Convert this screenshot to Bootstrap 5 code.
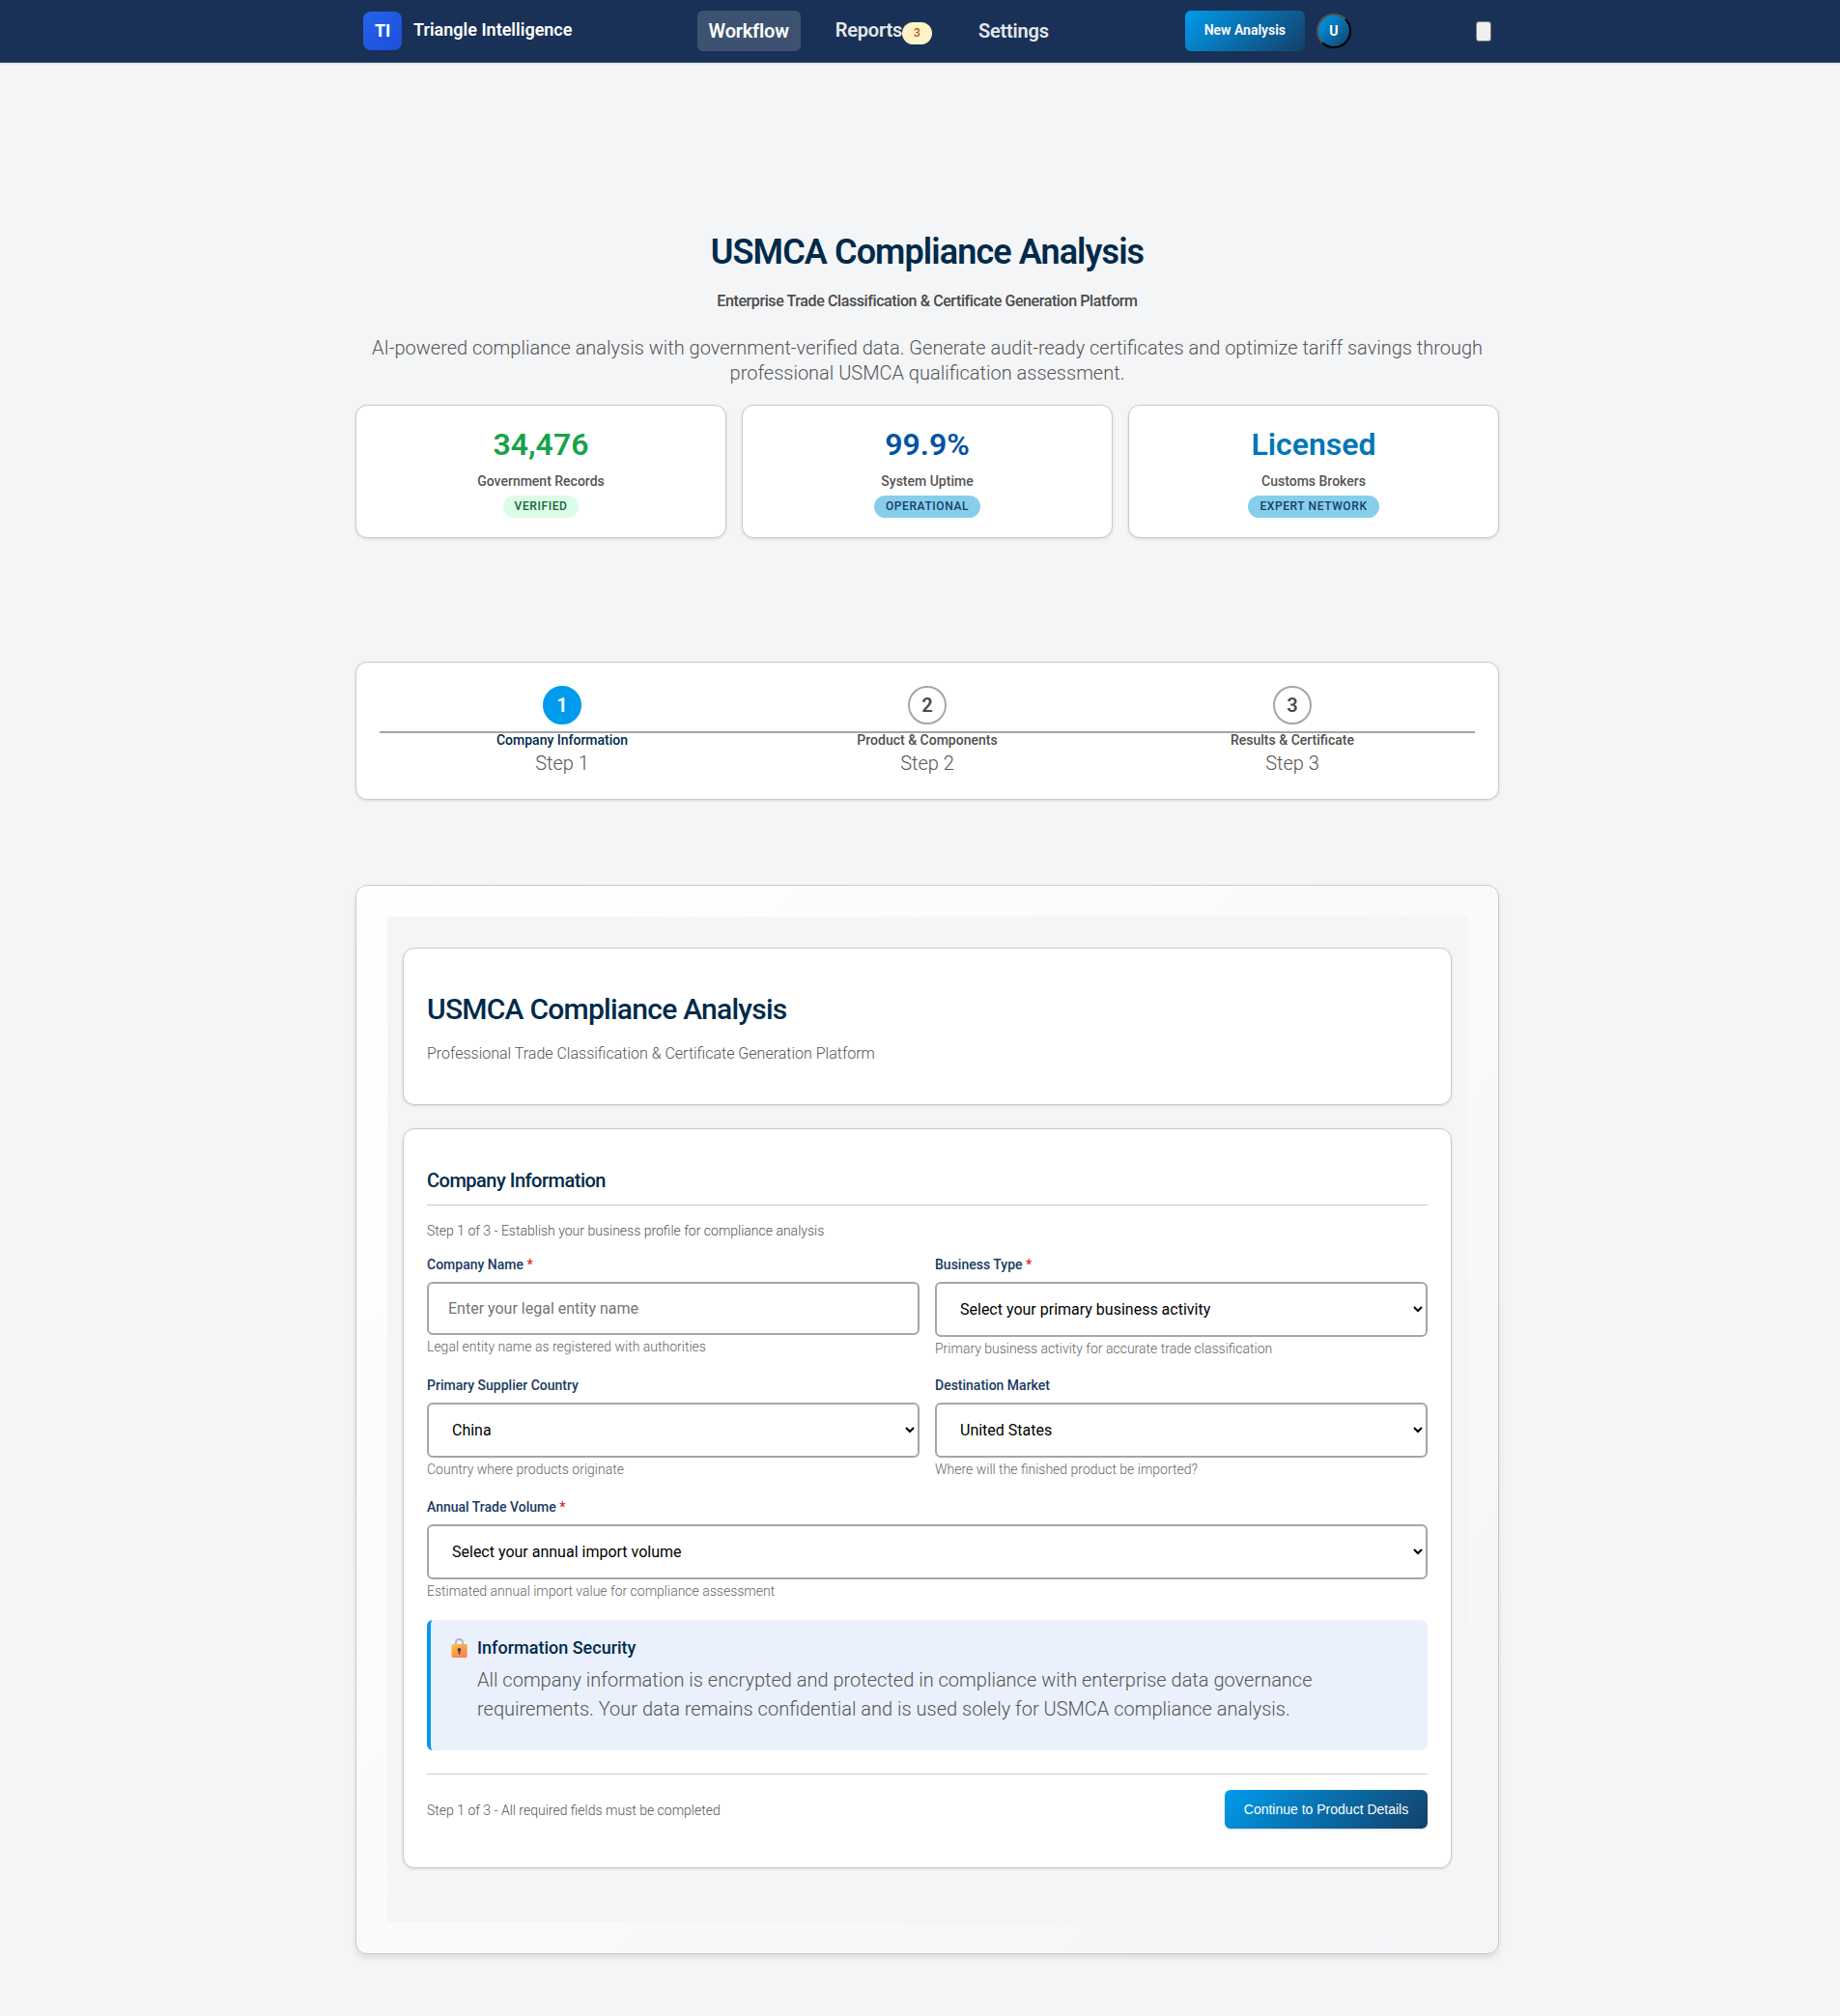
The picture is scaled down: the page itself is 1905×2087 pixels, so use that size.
<!DOCTYPE html>
<html lang="en">
<head>
<meta charset="utf-8">
<meta name="viewport" content="width=device-width, initial-scale=1">
<title>Triangle Intelligence</title>
<link rel="stylesheet" href="https://cdn.jsdelivr.net/npm/bootstrap@5.3.0/dist/css/bootstrap.min.css">
<style>
html{overflow-x:hidden}
body{width:1920px;min-height:2087px;background:#f4f5f7;font-family:Roboto,sans-serif;font-size:20px;font-weight:300;line-height:26px;color:#555;overflow:hidden}
h1,h2,h3,h4,p{margin:0}
.shell{width:1184px;margin:0 auto}
.topbar{height:65px;background:#193156;border-bottom:1px solid #2c4a70;box-shadow:0 1px 3px rgba(0,0,0,.12)}
.topbar .shell{height:64px;padding:0 8px}
.logo{width:40px;height:40px;border-radius:8px;background:linear-gradient(135deg,#2563eb,#1d4ed8);color:#fff;font-size:18px;font-weight:700;letter-spacing:-.3px}
.brand-name{font-size:18px;font-weight:600;color:#fff;line-height:24px;margin-top:-2px}
.menu{gap:24px}
.menu a{height:42px;padding:0 12px;border-radius:6px;color:#e5e7eb;font-weight:600;font-size:20px;letter-spacing:-.2px;text-decoration:none;display:flex;align-items:center}
.menu a.on{background:rgba(255,255,255,.16);color:#fff}
.menu .rep{margin-top:-2px}
.count{height:23px;padding:0 12px;border-radius:12px;background:#fef3c7;color:#b45309;font-size:12px;line-height:23px;letter-spacing:0;margin-top:4px;font-weight:500}
.grad{border:0;border-radius:6px;background:linear-gradient(135deg,#009bec,#134069);color:#fff}
.new-btn{height:42px;width:124px;font-size:14px;font-weight:600;padding:0 0 2px}
.avatar{width:36px;height:36px;border:2px outset #000;border-radius:50%;background:linear-gradient(135deg,#009bec,#134069);color:#fff;font-size:14px;font-weight:700;padding:0}
.burger{width:16px;height:21px;padding:0;border:1px solid #777;border-radius:3px;background:#efefef}
.panel{background:#fff;border:1px solid #c9cacc;border-radius:12px;box-shadow:0 1px 3px rgba(0,0,0,.12)}
.hero{padding-top:174px}
h1{font-size:36px;line-height:45px;font-weight:600;color:#012a4a;letter-spacing:-.025em}
.tagline{font-size:16px;line-height:24px;font-weight:500;color:#4b4b4b;margin:16px 0 23px;letter-spacing:-.025em}
.stats{display:grid;grid-template-columns:repeat(3,1fr);gap:16px;margin-top:20px}
.stat{height:138px;padding-top:20px}
.figure-num{font-size:32px;line-height:40px;font-weight:600}
.stat-label{font-size:14px;line-height:20px;font-weight:500;color:#555;margin:8px 0 5px}
.pill{height:23px;line-height:23px;padding:0 12px;border-radius:12px;font-size:12px;font-weight:500;letter-spacing:.6px;background:#87ceeb;color:#134069}
.pill.ok{background:#dcfce7;color:#166534}
.steps{position:relative;margin-top:128px;height:143px;padding:24px}
.steps::before{content:"";position:absolute;left:24px;right:24px;top:71px;height:2px;background:#a6a6a6}
.step-dot{width:40px;height:40px;border:2px solid #a6a6a6;border-radius:50%;background:#fff;color:#4b4b4b;font-weight:600;font-size:20px}
.now .step-dot{background:#009bec;border-color:#009bec;color:#fff}
.step-name{position:relative;font-size:14px;line-height:20px;font-weight:500;color:#4f4f4f;margin:6px 0 1px}
.now .step-name{color:#012a4a}
.outer{margin-top:88px;padding:32px;background:linear-gradient(135deg,#fff,#f4f5f7);box-shadow:0 4px 6px rgba(0,0,0,.1)}
.well-area{background:#f4f5f7;padding:32px 16px 56px}
.intro{height:163px;padding:44px 24px 0}
h2{font-size:30px;line-height:38px;font-weight:500;color:#012a4a;letter-spacing:-.025em}
.intro p{font-size:16px;line-height:24px;margin-top:15px}
.form-panel{margin-top:24px;padding:39px 24px 40px}
h3{font-size:20px;line-height:28px;font-weight:500;color:#012a4a;padding-bottom:11px;border-bottom:1px solid #c9cacc;letter-spacing:-.025em}
.fine{font-size:14px;line-height:22px}
.lede{margin-top:15px}
.fields{display:grid;grid-template-columns:1fr 1fr;column-gap:16px;row-gap:18px;margin-top:14px}
.wide{grid-column:1/3;margin-top:1px}
.fields label{display:block;font-size:14px;line-height:20px;font-weight:500;color:#193a63;margin-bottom:8px}
.fields label span{color:#dc2626}
.control{display:block;width:100%;height:57px;border:2px solid #a6a6a6;border-radius:6px;background:#fff;font:400 16px/24px Roboto,sans-serif;color:#000;padding:0 0 0 20px}
input.control{height:55px}
input.control::placeholder{color:#757575}
.hint{font-size:14px;line-height:20px;margin-top:2px;color:#666}
.secure{margin-top:20px;height:135px;border-left:4px solid #009bec;border-radius:6px;background:#eaf1fd;padding:17px 24px 0 21px}
.secure svg{margin:2px 10px 0 0;flex:none}
h4{font-size:18px;line-height:24px;font-weight:500;color:#012a4a;margin-bottom:6px}
.secure p{line-height:30px}
.actions{margin-top:24px;border-top:1px solid #c9cacc;padding-top:16px}
.actions .fine{padding-top:2px}
.go{width:210px;height:40px;font:400 14px "Liberation Sans",Arial,sans-serif;padding:0;box-shadow:0 1px 3px rgba(0,0,0,.15)}
</style>
<script src="https://cdn.jsdelivr.net/npm/bootstrap@5.3.0/dist/js/bootstrap.bundle.min.js"></script>
</head>
<body>
<header class="topbar">
  <div class="shell d-flex align-items-center justify-content-between">
    <div class="d-flex align-items-center">
      <div class="logo d-flex align-items-center justify-content-center me-2">TI</div>
      <div class="brand-name ms-1">Triangle Intelligence</div>
    </div>
    <nav class="menu d-flex">
      <a class="on" href="#">Workflow</a>
      <a href="#"><span class="rep">Reports</span><span class="count">3</span></a>
      <a href="#">Settings</a>
    </nav>
    <div class="d-flex align-items-center">
      <button class="grad new-btn me-2">New Analysis</button>
      <button class="avatar ms-1">U</button>
    </div>
    <button class="burger" aria-label="Menu"></button>
  </div>
</header>
<main class="shell">
  <section class="hero text-center">
    <h1>USMCA Compliance Analysis</h1>
    <p class="tagline">Enterprise Trade Classification &amp; Certificate Generation Platform</p>
    <p>AI-powered compliance analysis with government-verified data. Generate audit-ready certificates and optimize tariff savings through professional USMCA qualification assessment.</p>
    <div class="stats">
      <div class="panel stat d-flex flex-column align-items-center">
        <div class="figure-num" style="color:#16a34a">34,476</div>
        <div class="stat-label">Government Records</div><span class="pill ok">VERIFIED</span>
      </div>
      <div class="panel stat d-flex flex-column align-items-center">
        <div class="figure-num" style="color:#0353a4">99.9%</div>
        <div class="stat-label">System Uptime</div><span class="pill">OPERATIONAL</span>
      </div>
      <div class="panel stat d-flex flex-column align-items-center">
        <div class="figure-num" style="color:#0077b6">Licensed</div>
        <div class="stat-label">Customs Brokers</div><span class="pill">EXPERT NETWORK</span>
      </div>
    </div>
  </section>
  <section class="panel steps d-flex text-center">
    <div class="now flex-fill w-100 d-flex flex-column align-items-center"><div class="step-dot d-flex align-items-center justify-content-center">1</div><div class="step-name">Company Information</div><div>Step 1</div></div>
    <div class="flex-fill w-100 d-flex flex-column align-items-center"><div class="step-dot d-flex align-items-center justify-content-center">2</div><div class="step-name">Product &amp; Components</div><div>Step 2</div></div>
    <div class="flex-fill w-100 d-flex flex-column align-items-center"><div class="step-dot d-flex align-items-center justify-content-center">3</div><div class="step-name">Results &amp; Certificate</div><div>Step 3</div></div>
  </section>
  <section class="panel outer">
    <div class="well-area">
      <div class="panel intro">
        <h2>USMCA Compliance Analysis</h2>
        <p>Professional Trade Classification &amp; Certificate Generation Platform</p>
      </div>
      <form class="panel form-panel">
        <h3>Company Information</h3>
        <p class="fine lede">Step 1 of 3 - Establish your business profile for compliance analysis</p>
        <div class="fields">
          <div><label for="name">Company Name <span>*</span></label><input id="name" class="control" placeholder="Enter your legal entity name"><div class="hint">Legal entity name as registered with authorities</div></div>
          <div><label for="type">Business Type <span>*</span></label><select id="type" class="control"><option>Select your primary business activity</option></select><div class="hint">Primary business activity for accurate trade classification</div></div>
          <div><label for="origin">Primary Supplier Country</label><select id="origin" class="control"><option>China</option></select><div class="hint">Country where products originate</div></div>
          <div><label for="dest">Destination Market</label><select id="dest" class="control"><option>United States</option></select><div class="hint">Where will the finished product be imported?</div></div>
          <div class="wide"><label for="vol">Annual Trade Volume <span>*</span></label><select id="vol" class="control"><option>Select your annual import volume</option></select><div class="hint">Estimated annual import value for compliance assessment</div></div>
        </div>
        <div class="secure d-flex align-items-start">
          <svg width="17" height="20" viewBox="0 0 17 20"><defs><linearGradient id="gold" x1="0" y1="0" x2=".6" y2="1"><stop offset="0" stop-color="#fcc43c"/><stop offset="1" stop-color="#f8844e"/></linearGradient></defs><path d="M4.9 7V4.6a3.6 3.6 0 0 1 7.2 0V7" fill="none" stroke="#b9b3c0" stroke-width="2"/><rect x=".4" y="6" width="16.2" height="14" rx="1.6" fill="url(#gold)"/><circle cx="8.5" cy="11.8" r="1.9" fill="#4a3b52"/><rect x="7.6" y="12" width="1.8" height="4.6" rx=".8" fill="#4a3b52"/></svg>
          <div><h4>Information Security</h4><p>All company information is encrypted and protected in compliance with enterprise data governance<br>requirements. Your data remains confidential and is used solely for USMCA compliance analysis.</p></div>
        </div>
        <div class="actions d-flex align-items-center justify-content-between">
          <span class="fine">Step 1 of 3 - All required fields must be completed</span>
          <button type="button" class="grad go">Continue to Product Details</button>
        </div>
      </form>
    </div>
  </section>
</main>
</body>
</html>
